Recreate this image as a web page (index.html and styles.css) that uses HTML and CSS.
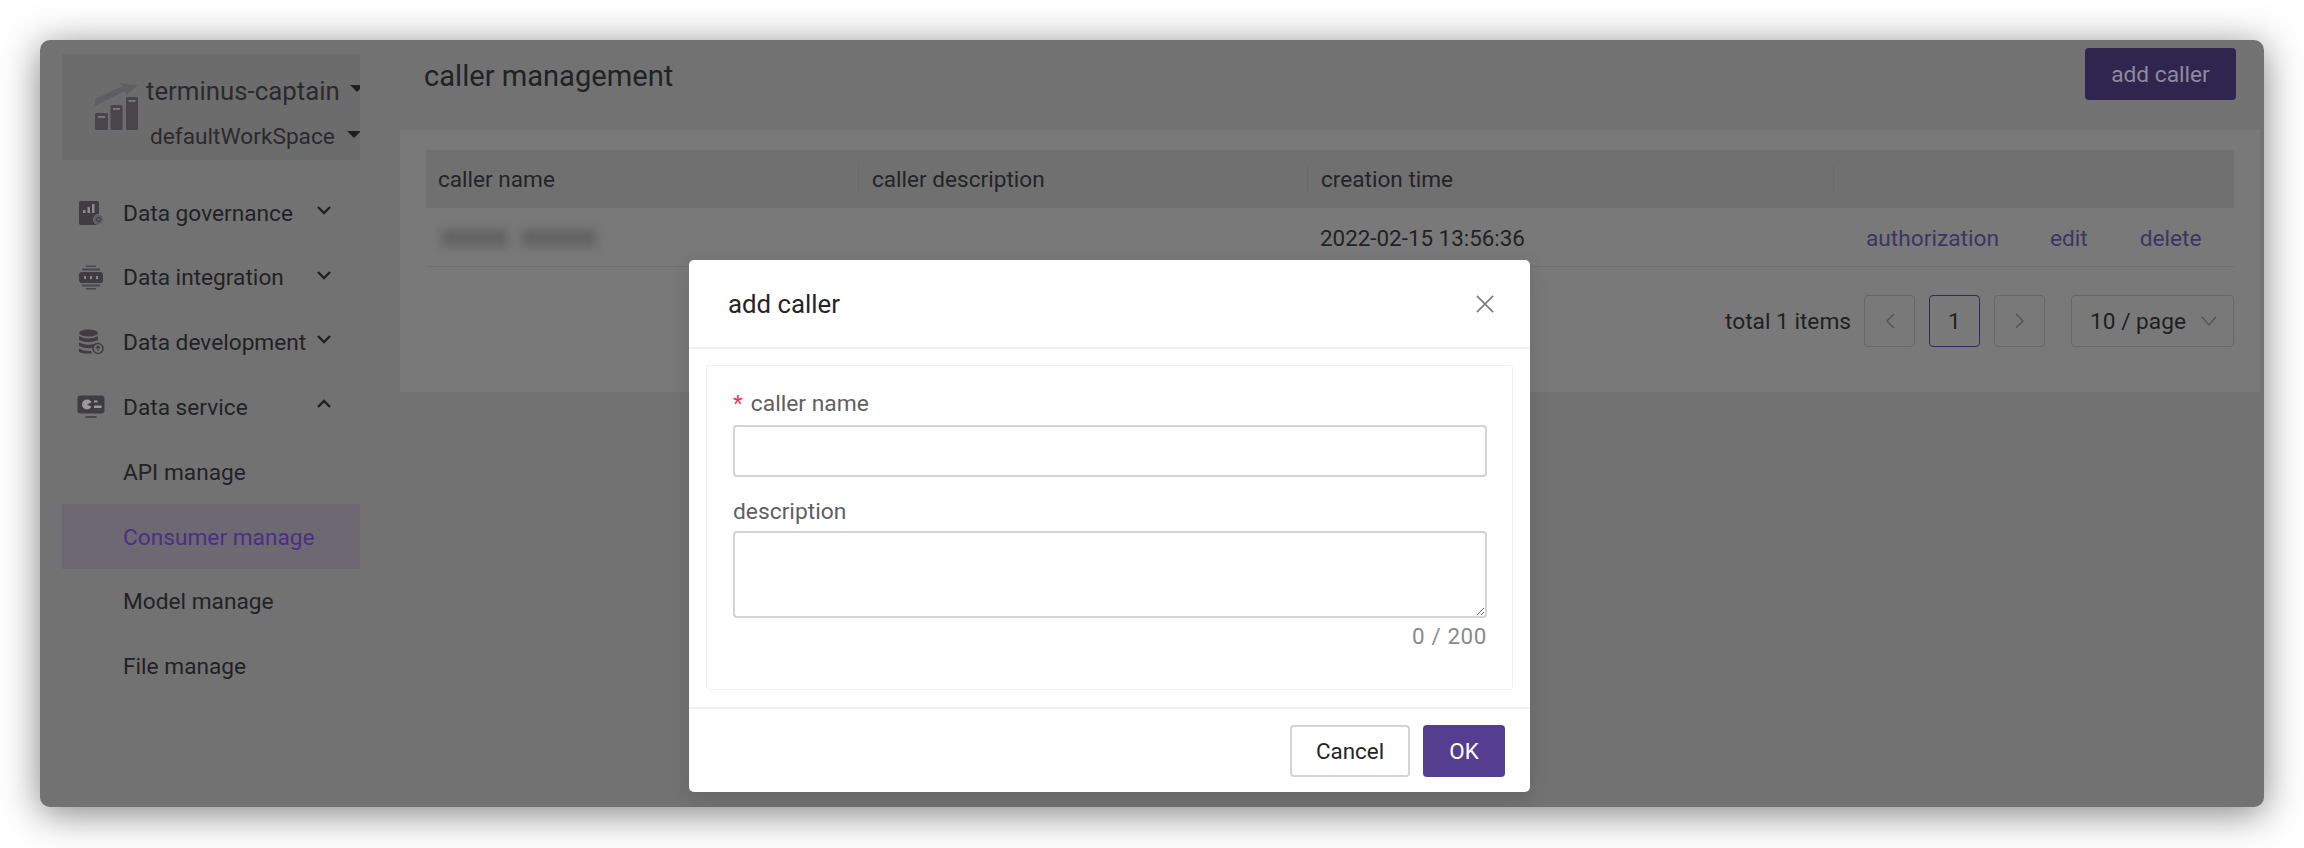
FILE: index.html
```html
<!DOCTYPE html>
<html lang="en">
<head>
<meta charset="utf-8">
<title>caller management</title>
<link rel="stylesheet" href="styles.css">
</head>
<body>
<div class="window">
  <aside class="sidebar">
    <div class="workspace">
      <svg class="logo" viewBox="0 0 48 50" width="48" height="50">
        <path d="M3 24 L3 17 L31 4 L27 1 L46 3 L34 13 L33 9 Z" fill="#5f5f61"/>
        <rect x="3" y="31" width="13" height="17" rx="1.5" fill="#48464c"/>
        <rect x="18.500" y="23" width="12" height="25" rx="1.500" fill="#48464c"/>
        <rect x="34" y="15" width="12" height="33" rx="1.500" fill="#48464c"/>
        <rect x="6" y="34" width="7" height="2" fill="#77767a"/>
        <rect x="21" y="26" width="7" height="2" fill="#77767a"/>
        <rect x="36.500" y="18" width="7" height="2" fill="#77767a"/>
      </svg>
      <div class="ws-names">
        <div class="ws-line ws-first"><span>terminus-captain</span><i class="caret"></i></div>
        <div class="ws-line ws-second"><span>defaultWorkSpace</span><i class="caret"></i></div>
      </div>
    </div>
    <nav class="menu">
      <div class="item">
        <svg class="icon" viewBox="0 0 26 26" width="26" height="26">
          <rect x="1" y="1" width="20" height="24" rx="2" fill="#3f3d42"/>
          <rect x="5" y="10" width="2.500" height="3" fill="#8a898c"/><rect x="9.500" y="7" width="2.500" height="6" fill="#8a898c"/><rect x="14" y="4" width="2.500" height="9" fill="#8a898c"/>
          <circle cx="20.500" cy="19.500" r="5" fill="#5d5c60" stroke="#727272"/>
          <circle cx="20.500" cy="19.500" r="2" fill="none" stroke="#3f3d42"/>
        </svg>
        <span class="label">Data governance</span>
        <svg class="chev" viewBox="0 0 16 10" width="16" height="10"><path d="M2 2 L8 8 L14 2" fill="none" stroke="#1f1f20" stroke-width="2.300"/></svg>
      </div>
      <div class="item">
        <svg class="icon" viewBox="0 0 26 26" width="26" height="26">
          <rect x="8" y="0.500" width="10" height="1.500" fill="#48464c"/><rect x="4" y="3.500" width="18" height="2" fill="#48464c"/>
          <rect x="1" y="7" width="24" height="11" rx="3" fill="#3f3d42"/>
          <rect x="6" y="11" width="2" height="3" fill="#8a898c"/><rect x="12" y="11" width="2" height="3" fill="#8a898c"/><rect x="18" y="11" width="2" height="3" fill="#8a898c"/>
          <rect x="4" y="19.500" width="18" height="2" fill="#48464c"/><rect x="8" y="23" width="10" height="1.500" fill="#48464c"/>
        </svg>
        <span class="label">Data integration</span>
        <svg class="chev" viewBox="0 0 16 10" width="16" height="10"><path d="M2 2 L8 8 L14 2" fill="none" stroke="#1f1f20" stroke-width="2.300"/></svg>
      </div>
      <div class="item">
        <svg class="icon" viewBox="0 0 26 26" width="26" height="26">
          <ellipse cx="10.500" cy="4" rx="9.500" ry="3.500" fill="#3f3d42"/>
          <path d="M1 7 Q10.500 12 20 7 V11 Q10.500 15.500 1 11 Z" fill="#3f3d42"/>
          <path d="M1 13.500 Q10.500 18 20 13.500 V17 Q10.500 21.500 1 17 Z" fill="#3f3d42"/>
          <path d="M1 19.500 Q6 22.500 13 22 L14 24.500 Q5 25 1 23 Z" fill="#3f3d42"/>
          <circle cx="20" cy="19.500" r="5" fill="#727272" stroke="#3f3d42" stroke-width="1.500"/>
          <path d="M20 22 V17 M18 19 L20 17 L22 19" fill="none" stroke="#3f3d42" stroke-width="1.200"/>
        </svg>
        <span class="label">Data development</span>
        <svg class="chev" viewBox="0 0 16 10" width="16" height="10"><path d="M2 2 L8 8 L14 2" fill="none" stroke="#1f1f20" stroke-width="2.300"/></svg>
      </div>
      <div class="item">
        <svg class="icon icon-wide" viewBox="0 0 28 24" width="28" height="24">
          <rect x="0.500" y="0.500" width="27" height="18" rx="3" fill="#3f3d42"/>
          <circle cx="10" cy="9.500" r="5" fill="#9a999c"/>
          <path d="M10 9.500 L16 6.500 V12.500 Z" fill="#3f3d42"/>
          <rect x="17" y="5.500" width="3.500" height="2" fill="#9a999c"/><rect x="17" y="10.500" width="7.500" height="2.500" fill="#9a999c"/>
          <rect x="8.500" y="21" width="11" height="2" fill="#48464c"/>
        </svg>
        <span class="label">Data service</span>
        <svg class="chev" viewBox="0 0 16 10" width="16" height="10"><path d="M2 8 L8 2 L14 8" fill="none" stroke="#1f1f20" stroke-width="2.300"/></svg>
      </div>
      <div class="item sub"><span class="label">API manage</span></div>
      <div class="item sub active"><span class="label">Consumer manage</span></div>
      <div class="item sub"><span class="label">Model manage</span></div>
      <div class="item sub"><span class="label">File manage</span></div>
    </nav>
  </aside>
  <main class="main">
    <header class="page-head">
      <h1 class="page-title">caller management</h1>
      <button class="primary-dim">add caller</button>
    </header>
    <section class="panel">
      <div class="table">
        <div class="thead">
          <div class="th">caller name</div>
          <div class="th">caller description</div>
          <div class="th">creation time</div>
          <div class="th"></div>
        </div>
        <div class="trow">
          <div class="td"><span class="blur-name"><i></i><i></i></span></div>
          <div class="td"></div>
          <div class="td">2022-02-15 13:56:36</div>
          <div class="td actions"><a>authorization</a><a>edit</a><a>delete</a></div>
        </div>
      </div>
      <div class="pager">
        <span class="total">total 1 items</span>
        <span class="pg"><svg viewBox="0 0 12 18" width="12" height="18"><path d="M10 2 L3 9 L10 16" fill="none" stroke="#555" stroke-width="1.500"/></svg></span>
        <span class="pg current">1</span>
        <span class="pg"><svg viewBox="0 0 12 18" width="12" height="18"><path d="M2 2 L9 9 L2 16" fill="none" stroke="#555" stroke-width="1.500"/></svg></span>
        <span class="size">10 / page<svg viewBox="0 0 16 10" width="16" height="10"><path d="M1 1 L8 9 L15 1" fill="none" stroke="#555" stroke-width="1.300"/></svg></span>
      </div>
    </section>
  </main>
  <div class="modal">
    <div class="modal-head">
      <span class="modal-title">add caller</span>
      <svg class="close" viewBox="0 0 20 20" width="20" height="20"><path d="M1 1 L19 19 M19 1 L1 19" fill="none" stroke="#7a7a7a" stroke-width="1.800"/></svg>
    </div>
    <div class="modal-body">
      <form class="form-card">
        <label class="field-label"><span class="req">*</span>caller name</label>
        <input class="input" type="text">
        <label class="field-label second">description</label>
        <textarea class="textarea"></textarea>
        <div class="count">0 / 200</div>
      </form>
    </div>
    <div class="modal-foot">
      <button class="btn" type="button">Cancel</button>
      <button class="btn ok" type="button">OK</button>
    </div>
  </div>
</div>
</body>
</html>
```

FILE: styles.css
```css
* { box-sizing: border-box; }
html, body { margin: 0; height: 848px; overflow: hidden; background: #fff; }
body { padding: 40px 40px 41px; font-family: Roboto, "Liberation Sans", sans-serif; color: #222; }

.window {
  position: relative;
  display: flex;
  height: 767px;
  border-radius: 10px;
  background: #727273;
  box-shadow: 0 6px 38px rgba(0,0,0,.5);
  overflow: hidden;
}

.sidebar { width: 360px; flex: none; padding: 14px 0 0 22px; }
.workspace {
  display: flex;
  width: 298px;
  height: 106px;
  padding: 28px 0 0 30px;
  background: #6c6c6d;
  overflow: hidden;
}
.logo { flex: none; margin-right: 6px; }
.ws-names { flex: none; }
.ws-line { display: flex; align-items: center; white-space: nowrap; color: #2a2a2c; }
.ws-first { margin-top: -11px; font-size: 25.800px; line-height: 40px; }
.ws-second { margin: 6px 0 0 4px; font-size: 22.700px; line-height: 40px; }
.ws-second .caret { margin-left: 12px; }
.caret { flex: none; width: 0; height: 0; margin-left: 10px; border: 7px solid transparent; border-top-color: #1e1e20; border-bottom: 0; transform: translateY(-3px); }

.menu { margin-top: 21px; }
.item { display: flex; align-items: center; height: 64.600px; width: 298px; padding-left: 16px; font-size: 22.700px; color: #222224; }
.icon { flex: none; width: 26px; margin-right: 19px; }
.icon-wide { width: 28px; margin: 0 18px 0 -1px; }
.label { white-space: nowrap; }
.chev { flex: none; position: relative; margin-left: auto; margin-right: 28px; transform: translateY(-3px); }
.sub { padding-left: 61px; padding-top: 2px; }
.active { background: #6e6873; color: #4b2f86; }

.main { flex: 1; min-width: 0; display: flex; flex-direction: column; }
.page-head { display: flex; align-items: flex-start; justify-content: space-between; height: 90px; padding: 8px 28px 0 24px; }
.page-title { margin: 8px 0 0; font-size: 29.100px; font-weight: 400; line-height: 40px; color: #222224; }
.primary-dim { width: 151px; height: 52px; border: 0; border-radius: 4px; background: #2f2650; color: #8f8aa0; font: 22.700px Roboto, sans-serif; }

.panel { height: 262px; margin-right: 4px; padding: 20px 26px 0 26px; background: #797979; }
.thead, .trow { display: grid; grid-template-columns: 432px 449px 526px 1fr; align-items: center; }
.thead { height: 58px; background: #707071; border-radius: 3px 3px 0 0; font-size: 22.600px; color: #242426; }
.th { padding-left: 13px; height: 30px; line-height: 32px; }
.th:first-child { padding-left: 12px; }
.th + .th { border-left: 1px solid #6a6a6a; }
.trow { height: 59px; padding-top: 2px; border-bottom: 1px solid #707070; font-size: 22.400px; color: #222224; }
.td { padding-left: 13px; }
.blur-name { display: flex; gap: 14px; padding-left: 3px; filter: blur(5px); }
.blur-name i { display: block; height: 18px; background: #636363; }
.blur-name i:first-child { width: 66px; }
.blur-name i:last-child { width: 74px; }
.actions { display: flex; padding-left: 0; font-size: 22.700px; color: #3c3563; }
.actions a:nth-child(1) { margin-left: 33px; }
.actions a:nth-child(2) { margin-left: 51px; }
.actions a:nth-child(3) { margin-left: 52px; }

.pager { display: flex; align-items: center; justify-content: flex-end; margin-top: 28px; font-size: 22.700px; color: #1f1f21; }
.total { margin-right: 13px; }
.pg { display: flex; align-items: center; justify-content: center; width: 51px; height: 52px; margin-right: 14px; border: 1.500px solid #686868; border-radius: 4px; }
.current { border-color: #2f2a5a; }
.size { display: flex; align-items: center; justify-content: space-between; width: 163px; height: 52px; margin-left: 12px; padding: 0 16px 0 18px; border: 1.500px solid #686868; border-radius: 4px; }

.modal {
  position: absolute;
  left: 649px;
  top: 220px;
  width: 841px;
  height: 532px;
  display: flex;
  flex-direction: column;
  background: #fff;
  border-radius: 5px;
  box-shadow: 0 6px 20px rgba(0,0,0,.12);
}
.modal-head { flex: none; display: flex; align-items: center; justify-content: space-between; height: 89px; padding: 0 36px 0 39px; border-bottom: 2px solid #f2f2f2; }
.modal-title { font-size: 25.800px; color: #262626; }
.close { flex: none; width: 18px; height: 18px; }
.modal-body { flex: 1; min-height: 0; padding: 16px 17px 17px; }
.form-card { height: 100%; padding: 21px 25px 0 26px; border: 1.500px solid #f0f0f0; border-radius: 3px; }
.field-label { display: block; height: 34px; font-size: 22.800px; line-height: 34px; color: #606060; }
.req { margin-right: 8px; color: #f5384a; }
.second { margin-top: 16px; height: 38px; line-height: 37px; }
.input, .textarea { display: block; width: 100%; border: 2px solid #d4d4d4; border-radius: 4px; background: #fff; outline: 0; }
.input { height: 52px; margin-top: 4px; }
.textarea { height: 87px; }
.count { margin-top: 3px; font-size: 22.400px; line-height: 30px; text-align: right; color: #8a8a8a; letter-spacing: .6px; }
.modal-foot { flex: none; display: flex; justify-content: flex-end; gap: 13px; height: 85px; padding: 16px 25px 0 0; border-top: 2px solid #f2f2f2; }
.btn { width: 120px; height: 52px; border: 2px solid #d4d4d4; border-radius: 4px; background: #fff; color: #262626; font: 22.400px Roboto, sans-serif; }
.ok { width: 82px; border: 0; background: #553d8f; color: #fff; }
```
